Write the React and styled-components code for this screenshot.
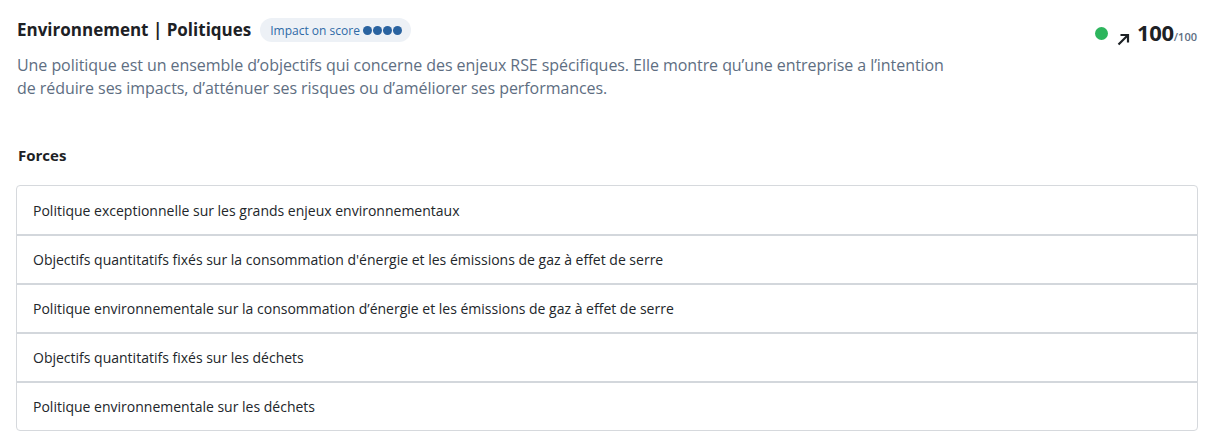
import React from "react"
import styled, { createGlobalStyle } from "styled-components"

const GlobalStyle = createGlobalStyle`
    body {
        margin: 0;
        background: #ffffff;
        font-family: "Open Sans", "Noto Sans", sans-serif;
        color: #1f2328;
    }
`

const forces = [
    "Politique exceptionnelle sur les grands enjeux environnementaux",
    "Objectifs quantitatifs fixés sur la consommation d'énergie et les émissions de gaz à effet de serre",
    "Politique environnementale sur la consommation d’énergie et les émissions de gaz à effet de serre",
    "Objectifs quantitatifs fixés sur les déchets",
    "Politique environnementale sur les déchets",
]

const Page = styled.div`
    padding: 16px 16px 0 16px;
`

const Header = styled.div`
    display: flex;
    justify-content: space-between;
    align-items: flex-start;
`

const HeaderText = styled.div`
    padding-left: 1px;
`

const TitleRow = styled.div`
    display: flex;
    align-items: center;
    gap: 9px;
`

const Title = styled.h2`
    margin: 0;
    font-size: 17px;
    font-weight: 700;
    line-height: 28px;
    color: #1d2125;
`

const Badge = styled.span`
    display: inline-flex;
    align-items: center;
    gap: 3px;
    height: 24px;
    padding: 0 9px 0 10px;
    border-radius: 12px;
    background: #edf1f6;
    color: #2e6aa6;
    font-size: 12px;
`

const Dots = styled.span`
    display: inline-flex;
    gap: 1px;
`

const Dot = styled.span`
    width: 9px;
    height: 9px;
    border-radius: 50%;
    background: #2a63a0;
`

const Description = styled.p`
    margin: 10px 0 0 0;
    max-width: 940px;
    font-size: 16px;
    line-height: 23px;
    letter-spacing: -0.06px;
    color: #5e6e82;
`

const Score = styled.div`
    display: flex;
    align-items: flex-start;
    margin-top: 5px;
`

const StatusDot = styled.span`
    width: 13px;
    height: 13px;
    border-radius: 50%;
    background: #2db55d;
    margin: 6px 9px 0 0;
`

const Arrow = styled.svg`
    margin: 12px 8px 0 0;
`

const Big = styled.span`
    font-size: 22px;
    font-weight: 700;
    line-height: 22px;
    color: #1d2125;
    letter-spacing: -0.3px;
    margin-left: -1px;
`

const Small = styled.span`
    font-size: 11px;
    font-weight: 600;
    line-height: 11px;
    color: #5e6e82;
    margin-top: 10px;
`

const SectionTitle = styled.h3`
    margin: 44px 0 0 2px;
    font-size: 15px;
    font-weight: 700;
    line-height: 22px;
    color: #1d2125;
`

const List = styled.ul`
    list-style: none;
    margin: 19px 0 0 0;
    padding: 0;
    width: 1182px;
    box-sizing: border-box;
    border: 1px solid #d6d9dd;
    border-radius: 4px;
`

const Row = styled.li`
    display: flex;
    align-items: center;
    padding-left: 16px;
    font-size: 14px;
    color: #22262a;
    border-top: ${p => (p.first ? "none" : "2px solid #d3d7dc")};
    box-sizing: border-box;
    height: ${p => (p.first ? "48px" : "49px")};
`

const App = () => {
    return (
        <Page>
            <GlobalStyle />
            <Header>
                <HeaderText>
                    <TitleRow>
                        <Title>Environnement | Politiques</Title>
                        <Badge>
                            Impact on score
                            <Dots>
                                <Dot />
                                <Dot />
                                <Dot />
                                <Dot />
                            </Dots>
                        </Badge>
                    </TitleRow>
                    <Description>
                        Une politique est un ensemble d’objectifs qui concerne des enjeux RSE spécifiques. Elle montre qu’une entreprise a l’intention de réduire ses impacts, d’atténuer ses risques ou d’améliorer ses performances.
                    </Description>
                </HeaderText>
                <Score>
                    <StatusDot />
                    <Arrow width="13" height="13" viewBox="0 0 13 13" fill="none">
                        <path d="M1.5 11.5 L11 2 M3.5 2 H11 V9.5" stroke="#1d2125" strokeWidth="2.2" />
                    </Arrow>
                    <Big>100</Big>
                    <Small>/100</Small>
                </Score>
            </Header>
            <SectionTitle>Forces</SectionTitle>
            <List>
                {forces.map((f, i) => (
                    <Row key={i} first={i === 0}>{f}</Row>
                ))}
            </List>
        </Page>
    )
}

export default App
